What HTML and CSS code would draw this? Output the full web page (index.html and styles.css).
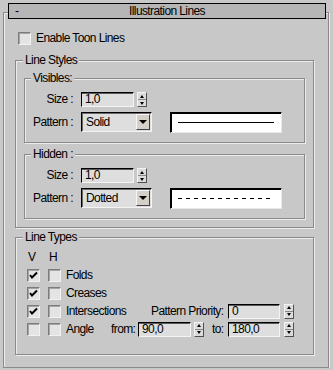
FILE: index.html
```html
<!DOCTYPE html>
<html lang="en">
<head>
    <meta charset="UTF-8">
    <meta name="viewport" content="width=device-width, initial-scale=1.0">
    <title>Illustration Lines</title>
    <link rel="stylesheet" href="styles.css">
</head>
<body>
    <div class="rollout">
        <!-- rollout header -->
        <div class="rollout-title">
            <span class="toggle">-</span>
            <span class="title-text">Illustration Lines</span>
        </div>

        <div class="check-row enable"><span class="cb"></span>Enable Toon Lines</div>

        <!-- line styles -->
        <fieldset class="group styles">
            <legend>Line Styles</legend>

            <fieldset class="group sub">
                <legend>Visibles:</legend>
                <div class="field-row">
                    <span class="lbl">Size :</span>
                    <span class="num">1,0</span>
                    <span class="spin"><i class="up"></i><i class="down"></i></span>
                </div>
                <div class="field-row pattern">
                    <span class="lbl">Pattern :</span>
                    <span class="combo"><span class="combo-text">Solid</span><span class="combo-btn"></span></span>
                    <span class="preview"><span class="line solid"></span></span>
                </div>
            </fieldset>

            <fieldset class="group sub hidden-lines">
                <legend>Hidden :</legend>
                <div class="field-row">
                    <span class="lbl">Size :</span>
                    <span class="num">1,0</span>
                    <span class="spin"><i class="up"></i><i class="down"></i></span>
                </div>
                <div class="field-row pattern">
                    <span class="lbl">Pattern :</span>
                    <span class="combo"><span class="combo-text">Dotted</span><span class="combo-btn"></span></span>
                    <span class="preview"><span class="line dotted"></span></span>
                </div>
            </fieldset>
        </fieldset>

        <!-- line types -->
        <fieldset class="group types">
            <legend>Line Types</legend>
            <div class="type-row head">
                <span class="col">V</span>
                <span class="col">H</span>
            </div>
            <div class="type-row">
                <span class="cb checked"><svg viewBox="0 0 11 11" width="11" height="11"><path d="M2 5 L4 7.5 L9 2.5" fill="none" stroke="#000" stroke-width="2"/></svg></span>
                <span class="cb"></span>
                <span class="name">Folds</span>
            </div>
            <div class="type-row">
                <span class="cb checked"><svg viewBox="0 0 11 11" width="11" height="11"><path d="M2 5 L4 7.5 L9 2.5" fill="none" stroke="#000" stroke-width="2"/></svg></span>
                <span class="cb"></span>
                <span class="name">Creases</span>
            </div>
            <div class="type-row">
                <span class="cb checked"><svg viewBox="0 0 11 11" width="11" height="11"><path d="M2 5 L4 7.5 L9 2.5" fill="none" stroke="#000" stroke-width="2"/></svg></span>
                <span class="cb"></span>
                <span class="name name-wide">Intersections</span>
                <span class="lbl-priority">Pattern Priority:</span>
                <span class="num num-sm">0</span>
                <span class="spin spin-far"><i class="up"></i><i class="down"></i></span>
            </div>
            <div class="type-row">
                <span class="cb"></span>
                <span class="cb"></span>
                <span class="name name-short">Angle</span>
                <span class="lbl-from">from:</span>
                <span class="num">90,0</span>
                <span class="spin"><i class="up"></i><i class="down"></i></span>
                <span class="lbl-to">to:</span>
                <span class="num num-sm">180,0</span>
                <span class="spin spin-far"><i class="up"></i><i class="down"></i></span>
            </div>
        </fieldset>
    </div>
</body>
</html>
```

FILE: styles.css
```css
*{
    box-sizing: border-box;
}
body{
    margin: 0;
    background: #c8c8c8;
    font: 12px/13px "Liberation Sans", Arial, sans-serif;
    letter-spacing: -0.6px;
    color: #000;
    white-space: nowrap;
}
.rollout{
    margin: 12px 4px 0 3px;
    padding: 0 14px 12px 11px;
    border: 1px solid #8a8a8a;
    box-shadow: 1px 1px 0 #ececec, inset 1px 1px 0 #ececec;
}
.rollout-title{
    display: grid;
    grid-template-columns: 1fr auto 1fr;
    align-items: center;
    height: 16px;
    margin: -10px -12px 0 -7px;
    border: 1px solid #000;
    background: #b6b6b6;
}
.toggle{
    padding-left: 6px;
}
.check-row{
    display: flex;
    align-items: center;
}
.enable{
    height: 13px;
    margin: 13px 0 0 3px;
    gap: 5px;
}
.cb{
    display: flex;
    align-items: center;
    justify-content: center;
    width: 13px;
    height: 13px;
    flex: none;
    border: 1px solid;
    border-color: #7c7c7c #f2f2f2 #f2f2f2 #7c7c7c;
    background: #e4e4e4;
    box-shadow: inset 1px 1px 0 #a4a4a4;
}
.cb svg{
    display: block;
}

/* group boxes */
.group{
    margin: 0;
    min-width: 0;
    border: 1px solid #8a8a8a;
    box-shadow: 1px 1px 0 #ececec, inset 1px 1px 0 #ececec;
}
.group legend{
    padding: 0 2px;
    margin-left: -1px;
    background: #c8c8c8;
    line-height: 13px;
}
.styles{
    margin-top: 9px;
    padding: 5px 8px 8px;
}
.sub{
    padding: 7px 0 9px;
}
.sub legend{
    margin-left: 6px;
}
.hidden-lines{
    margin-top: 5px;
}
.types{
    margin-top: 3px;
    padding: 4px 0 16px 11px;
}
.types legend{
    margin-left: -4px;
}

/* rows of fields */
.field-row{
    display: flex;
    align-items: center;
    height: 15px;
}
.field-row.pattern{
    height: 21px;
    margin-top: 5px;
    align-items: flex-start;
}
.lbl{
    width: 48px;
    margin-right: 8px;
    text-align: right;
}
.pattern .lbl{
    line-height: 20px;
}
.num{
    width: 53px;
    height: 15px;
    flex: none;
    padding: 0 0 0 3px;
    border: 1px solid;
    border-color: #000 #f4f4f4 #f4f4f4 #000;
    background: #dedede;
    box-shadow: inset 0 1px 0 #5a5a5a;
    line-height: 13px;
}
.num-sm{
    width: 52px;
}
.spin{
    display: flex;
    flex-direction: column;
    width: 10px;
    height: 15px;
    flex: none;
    margin-left: 3px;
    border: 1px solid;
    border-color: #f4f4f4 #505050 #505050 #f4f4f4;
    background: #dcdcdc;
}
.spin-far{
    margin-left: 4px;
}
.spin i{
    flex: 1;
    display: flex;
    align-items: center;
    justify-content: center;
}
.spin .up{
    border-bottom: 1px solid #8a8a8a;
}
.spin .up::after,
.spin .down::after{
    content: "";
    border-left: 2px solid transparent;
    border-right: 2px solid transparent;
}
.spin .up::after{
    border-bottom: 3px solid #000;
}
.spin .down::after{
    border-top: 3px solid #000;
}
.combo{
    display: flex;
    align-items: center;
    width: 71px;
    height: 20px;
    flex: none;
    padding: 1px 1px 1px 3px;
    border: 1px solid;
    border-color: #000 #f4f4f4 #f4f4f4 #000;
    background: #dedede;
    box-shadow: inset 1px 1px 0 #6a6a6a;
}
.combo-text{
    flex: 1;
    padding-left: 1px;
}
.combo-btn{
    display: flex;
    align-items: center;
    justify-content: center;
    width: 14px;
    height: 16px;
    border: 1px solid;
    border-color: #f8f8f8 #404040 #404040 #f8f8f8;
    background: #d4d0c8;
}
.combo-btn::after{
    content: "";
    border-left: 4px solid transparent;
    border-right: 4px solid transparent;
    border-top: 4px solid #000;
}
.preview{
    display: flex;
    align-items: center;
    width: 112px;
    height: 21px;
    margin-left: 18px;
    padding: 0 6px 0 7px;
    border: 1px solid;
    border-color: #000 #e8e8e8 #e8e8e8 #000;
    box-shadow: inset 1px 1px 0 #000;
    background: #fff;
}
.line{
    display: block;
    width: 96px;
    height: 1px;
}
.line.solid{
    background: #000;
}
.line.dotted{
    width: 92px;
    background: repeating-linear-gradient(to right, #000 0 4px, transparent 4px 8px);
}

/* line types */
.type-row{
    display: flex;
    align-items: center;
    height: 18px;
}
.type-row .cb + .cb{
    margin-left: 8px;
}
.head .col{
    width: 21px;
    padding-left: 1px;
}
.name{
    margin-left: 5px;
}
.name-wide{
    width: 85px;
}
.name-short{
    width: 45px;
}
.lbl-priority{
    width: 77px;
}
.lbl-from{
    width: 27px;
}
.lbl-to{
    width: 16px;
    margin-left: 8px;
}
```
